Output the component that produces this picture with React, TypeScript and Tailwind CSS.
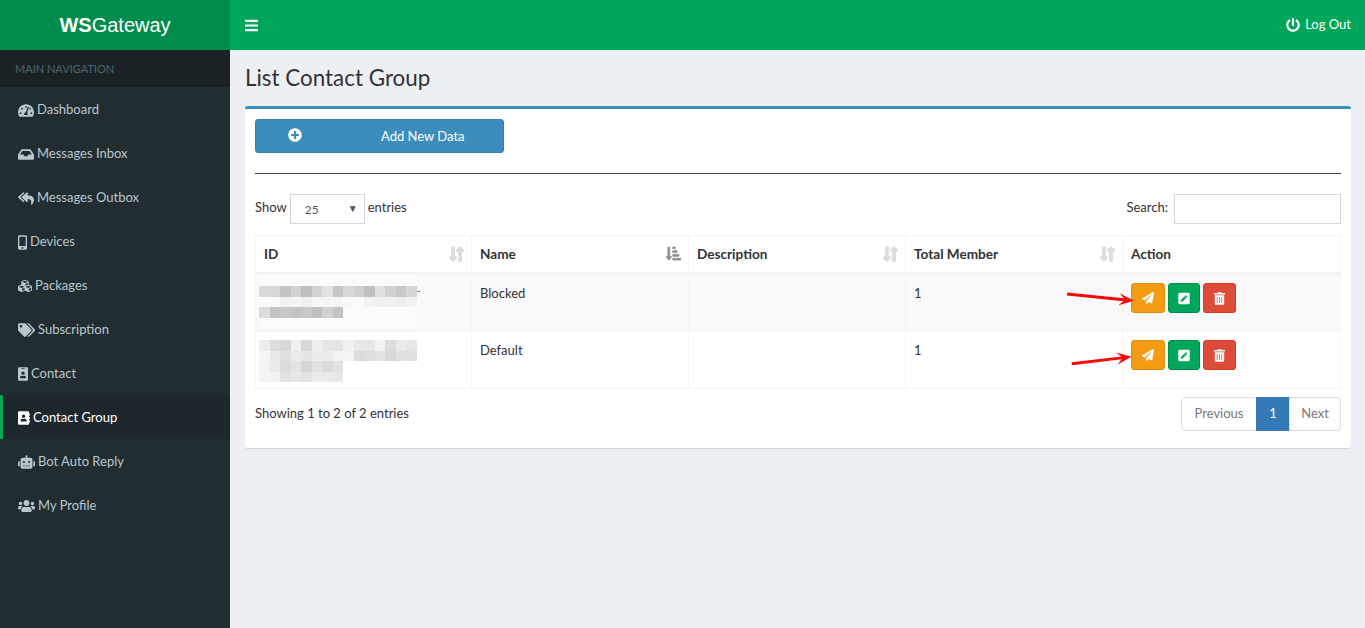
import {
  FaTachometerAlt,
  FaInbox,
  FaReplyAll,
  FaMobileAlt,
  FaCubes,
  FaTags,
  FaIdBadge,
  FaAddressBook,
  FaRobot,
  FaUsers,
  FaBars,
  FaPowerOff,
  FaPlusCircle,
  FaPaperPlane,
  FaPenSquare,
  FaTrashAlt,
  FaLongArrowAltDown,
  FaLongArrowAltUp,
  FaSortAmountDownAlt,
} from "react-icons/fa"

const menu = [
  { label: "Dashboard", icon: FaTachometerAlt, box: "w-[16px] h-[15px]" },
  { label: "Messages Inbox", icon: FaInbox, box: "w-[16px] h-[15px]" },
  { label: "Messages Outbox", icon: FaReplyAll, box: "w-[16px] h-[15px]" },
  { label: "Devices", icon: FaMobileAlt, box: "w-[9px] h-[15px]" },
  { label: "Packages", icon: FaCubes, box: "w-[14px] h-[14px]" },
  { label: "Subscription", icon: FaTags, box: "w-[17px] h-[14px]" },
  { label: "Contact", icon: FaIdBadge, box: "w-[10px] h-[14px]" },
  { label: "Contact Group", icon: FaAddressBook, box: "w-[12px] h-[14px]", active: true },
  { label: "Bot Auto Reply", icon: FaRobot, box: "w-[17px] h-[14px]" },
  { label: "My Profile", icon: FaUsers, box: "w-[17px] h-[14px]" },
]

// redaction blocks from the screenshot, one list of gray levels per row
const blur1 = [
  ["#dadada", "#d8d8d8", "#c4c4c4", "#d2d2d2", "#bfbfbf", "#d4d4d4", "#e2e2e2", "#c6c6c6", "#d8d8d8", "#d0d0d0", "#c0c0c0", "#e0e0e0", "#d2d2d2", "#c8c8c8", "#d6d6d6"],
  ["#fafafa", "#fafafa", "#f2f2f2", "#f4f4f4", "#f0f0f0", "#f7f7f7", "#f6f6f6", "#f5f5f5", "#f8f8f8", "#fafafa", "#f2f2f2", "#f0f0f0", "#f1f1f1", "#ededed", "#f2f2f2"],
  ["#dcdcdc", "#c4c4c4", "#c8c8c8", "#c4c4c4", "#c8c8c8", "#c0c0c0", "#d0d0d0", "#c4c4c4"],
]
const blur2 = [
  ["#ececec", "#dcdcdc", "#d8d8d8", "#f0f0f0", "#d8d8d8", "#eeeeee", "#e6e6e6", "#e4e4e4", "#f0f0f0", "#e8e8e8", "#e6e6e6", "#f2f2f2", "#dcdcdc", "#eaeaea", "#e6e6e6"],
  ["#f6f6f6", "#e8e8e8", "#e0e0e0", "#eaeaea", "#e6e6e6", "#ececec", "#ececec", "#f2f2f2", "#f4f4f4", "#dcdcdc", "#dedede", "#e2e2e2", "#d8d8d8", "#e2e2e2", "#e0e0e0"],
  ["#f2f2f2", "#eaeaea", "#dcdcdc", "#e4e4e4", "#d6d6d6", "#e2e2e2", "#dcdcdc", "#e2e2e2"],
  ["#f4f4f4", "#f2f2f2", "#e2e2e2", "#e8e8e8", "#e4e4e4", "#eaeaea", "#eaeaea", "#e8e8e8"],
]

function Blur({ rows }: { rows: string[][] }) {
  return (
    <div className="flex flex-col">
      {rows.map((row, i) => (
        <div key={i} className="flex h-[10.6px]">
          {row.map((c, j) => (
            <div key={j} className="w-[10.53px] h-full" style={{ backgroundColor: c }} />
          ))}
        </div>
      ))}
    </div>
  )
}

function SortIcon({ numeric }: { numeric?: boolean }) {
  return (
    <span className="absolute right-[7px] top-[10px] flex text-[#dcdcdc]">
      {numeric ? (
        <FaSortAmountDownAlt className="w-[15px] h-[15px] text-[#8f8f8f] stroke-current stroke-[24]" />
      ) : (
        <>
          <FaLongArrowAltDown className="w-[8px] h-[16px] -mr-px stroke-current stroke-[40]" />
          <FaLongArrowAltUp className="w-[8px] h-[16px] stroke-current stroke-[40]" />
        </>
      )}
    </span>
  )
}

function ActionButtons() {
  return (
    <div className="flex gap-[3px]">
      <button className="w-[34px] h-[30px] flex items-center justify-center rounded-[3px] border border-[#e08e0b] bg-[#f39c12] text-white">
        <FaPaperPlane className="w-[12px] h-[12px]" />
      </button>
      <button className="w-[32px] h-[30px] flex items-center justify-center rounded-[3px] border border-[#008d4c] bg-[#00a65a] text-white">
        <FaPenSquare className="w-[12px] h-[13px]" />
      </button>
      <button className="w-[33px] h-[30px] flex items-center justify-center rounded-[3px] border border-[#d73925] bg-[#dd4b39] text-white">
        <FaTrashAlt className="w-[11px] h-[13px]" />
      </button>
    </div>
  )
}

function Arrow({ x1, y1, x2, y2 }: { x1: number; y1: number; x2: number; y2: number }) {
  const a = Math.atan2(y2 - y1, x2 - x1)
  const pt = (d: number, o: number) =>
    `${x2 - d * Math.cos(a) - o * Math.sin(a)},${y2 - d * Math.sin(a) + o * Math.cos(a)}`
  return (
    <svg className="absolute left-0 top-0 pointer-events-none" width="1365" height="628">
      <line x1={x1} y1={y1} x2={x2 - 8 * Math.cos(a)} y2={y2 - 8 * Math.sin(a)} stroke="#f60b0b" strokeWidth="3" />
      <polygon points={`${x2},${y2} ${pt(15, -6)} ${pt(9, 0)} ${pt(15, 6)}`} fill="#f60b0b" />
    </svg>
  )
}

const th = "relative text-left font-bold text-[13.6px] text-[#333] border border-[#f4f4f4] border-b-[3px] px-2 h-[38px] align-middle"
const td = "border border-[#f4f4f4] p-2 pt-[9px] align-top"

export default function App() {
  return (
    <div className="relative flex h-[628px] overflow-hidden bg-[#ecf0f5] text-[13px] text-[#333] font-['Lato','Noto_Sans',sans-serif]">
      <aside className="w-[230px] shrink-0 bg-[#222d32] flex flex-col">
        <div className="h-[50px] bg-[#008d4c] text-white text-[20px] flex items-center justify-center font-['Liberation_Sans',sans-serif]">
          <b>WS</b>Gateway
        </div>
        <div className="h-[37px] pt-px bg-[#1a2226] text-[#4b646f] text-[11px] px-[15px] flex items-center">MAIN NAVIGATION</div>
        {menu.map((m) => (
          <div
            key={m.label}
            className={`h-[44px] flex items-center gap-[3px] pl-[15px] pt-[2px] border-l-[3px] ${
              m.active ? "bg-[#1e282c] border-[#00a65a] text-white" : "border-transparent text-[#b8c7ce]"
            }`}
          >
            <m.icon className={m.box} />
            <span>{m.label}</span>
          </div>
        ))}
      </aside>

      <div className="flex-1 flex flex-col min-w-0">
        <header className="h-[50px] shrink-0 bg-[#00a65a] text-white flex items-center justify-between pl-[15px] pr-[14px]">
          <FaBars className="w-[13px] h-[15px]" />
          <div className="flex items-center gap-[5px]">
            <FaPowerOff className="w-[14px] h-[14px]" />
            <span>Log Out</span>
          </div>
        </header>

        <main className="pl-[15px] pr-[14px]">
          <h1 className="text-[22.4px] leading-[26px] mt-[15px] mb-[15px] font-normal text-[#333]">List Contact Group</h1>

          <section className="bg-white rounded-[3px] border-t-[3px] border-[#3c8dbc] shadow-[0_1px_1px_rgba(0,0,0,0.1)] h-[342px] px-[10px] pt-[10px]">
            <button className="w-[249px] h-[34px] rounded-[3px] border border-[#367fa9] bg-[#3c8dbc] text-white flex items-center">
              <FaPlusCircle className="w-[14px] h-[14px] ml-[32px] -mt-[2px]" />
              <span className="ml-[79px] pt-[2px]">Add New Data</span>
            </button>
            <hr className="mt-[20px] mb-[20px] border-t border-[#444]" />

            <div className="flex items-center justify-between h-[30px] mb-[11px]">
              <div className="flex items-center">
                <span className="mb-[3px]">Show</span>
                <div className="relative w-[75px] h-[30px] ml-[3px] mr-[3px] border border-[#d2d6de] flex items-center pl-[14px] pt-[2px] text-[12px] text-[#555]">
                  25
                  <span className="absolute right-[6px] top-[6px] text-[10px]">▼</span>
                </div>
                <span className="mb-[3px]">entries</span>
              </div>
              <div className="flex items-center gap-[6px]">
                <span className="mb-[3px]">Search:</span>
                <input className="w-[167px] h-[30px] border border-[#d2d6de] outline-none" />
              </div>
            </div>

            <table className="w-[1085px] table-fixed border-collapse">
              <colgroup>
                <col className="w-[216px]" />
                <col className="w-[217px]" />
                <col className="w-[217px]" />
                <col className="w-[217px]" />
                <col className="w-[218px]" />
              </colgroup>
              <thead>
                <tr>
                  <th className={th}>ID<SortIcon /></th>
                  <th className={th}>Name<SortIcon numeric /></th>
                  <th className={th}>Description<SortIcon /></th>
                  <th className={th}>Total Member<SortIcon /></th>
                  <th className={th}>Action</th>
                </tr>
              </thead>
              <tbody>
                <tr className="bg-[#f9f9f9] h-[58px]">
                  <td className="border border-[#f4f4f4] pl-[3px] pr-0 py-0 align-top">
                    <div className="relative w-[158px] h-[54px] bg-[#fbfbfb] pt-[11px]">
                      <Blur rows={blur1} />
                      <span className="absolute left-[158px] top-[16px] w-[3px] h-px bg-[#777]" />
                    </div>
                  </td>
                  <td className={td}>Blocked</td>
                  <td className={td}></td>
                  <td className={td}>1</td>
                  <td className="border border-[#f4f4f4] p-2 align-top"><ActionButtons /></td>
                </tr>
                <tr className="h-[57px]">
                  <td className="border border-[#f4f4f4] pl-[3px] pr-0 py-0 align-top">
                    <div className="w-[158px] h-[60px] -mb-[5px] bg-white pt-[8px]">
                      <Blur rows={blur2} />
                    </div>
                  </td>
                  <td className={td}>Default</td>
                  <td className={td}></td>
                  <td className={td}>1</td>
                  <td className="border border-[#f4f4f4] p-2 align-top"><ActionButtons /></td>
                </tr>
              </tbody>
            </table>

            <div className="flex items-start justify-between mt-[8px]">
              <span className="mt-[7px]">Showing 1 to 2 of 2 entries</span>
              <div className="flex h-[34px]">
                <span className="w-[76px] justify-center flex items-center border border-[#ddd] rounded-l-[4px] text-[#777]">Previous</span>
                <span className="w-[34px] flex items-center justify-center bg-[#337ab7] text-white border border-[#337ab7] -ml-px">1</span>
                <span className="w-[52px] justify-center flex items-center border border-[#ddd] rounded-r-[4px] text-[#777] -ml-px">Next</span>
              </div>
            </div>
          </section>
        </main>
      </div>

      <Arrow x1={1067} y1={294} x2={1134} y2={300.7} />
      <Arrow x1={1071.7} y1={363.7} x2={1131.7} y2={356.7} />
    </div>
  )
}
